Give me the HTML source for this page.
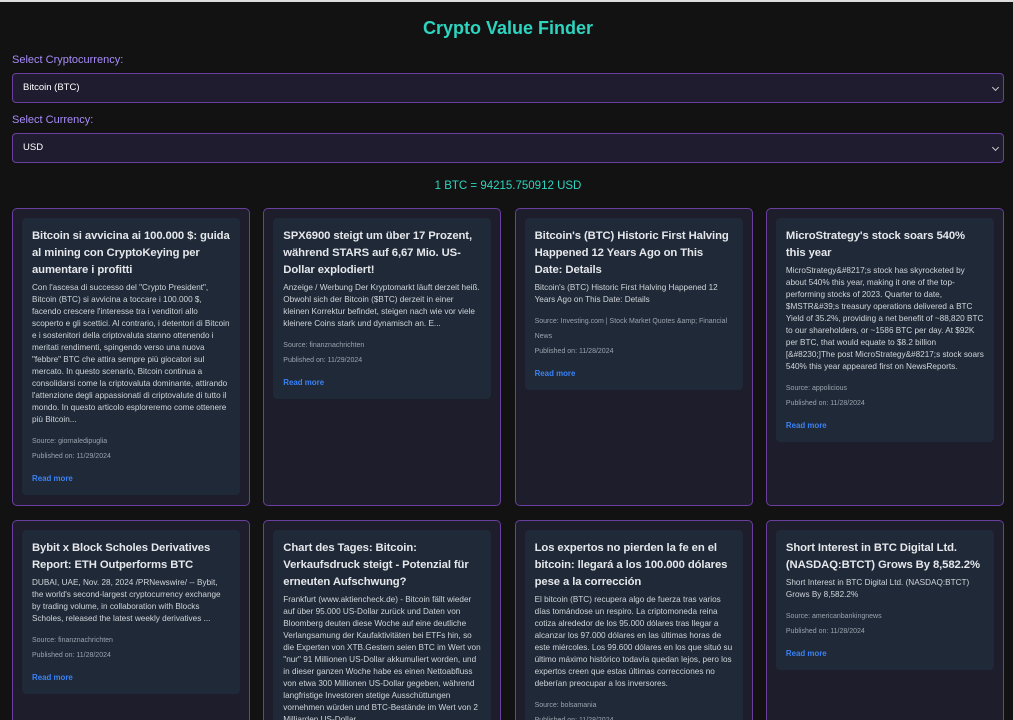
<!DOCTYPE html>
<html><head><meta charset="utf-8"><style>
*{box-sizing:border-box;margin:0;padding:0}
html,body{height:720px;overflow:hidden}
body{background:#121212;width:1013px;font-family:"Liberation Sans",sans-serif;color:#e5e7eb;padding:0 9px 0 12px;border-top:2px solid #ddd}
h1{text-align:center;color:#2dd4bf;font-size:18px;font-weight:bold;margin-top:15px;height:28px;line-height:22px}
label{display:block;color:#a78bfa;font-size:11px;height:16px;line-height:16px}
.sel{height:30px;background:#1e1c2e;border:1px solid #6b3fa0;border-radius:4px;font-size:9.5px;padding-left:10px;line-height:28px;color:#fff;position:relative;margin-top:5px;margin-bottom:9px}
.sel:after{content:"";position:absolute;right:5px;top:11px;width:4px;height:4px;border-right:1.3px solid #ccc;border-bottom:1.3px solid #ccc;transform:rotate(45deg)}
.rate{text-align:center;color:#2dd4bf;font-size:11.5px;margin-top:16px;height:29px;line-height:14px}
.grid{display:grid;grid-template-columns:repeat(4,238px);column-gap:13.3px;row-gap:14px}
.o{background:#1d1d2c;border:1px solid #6b3fa0;border-radius:5px;padding:9px 9px;height:298px}
.i{background:#1f2937;border-radius:4px;padding:10px 10px 10px;}
.i h3{font-size:11.3px;line-height:17px;color:#e5e7eb;font-weight:bold;margin-bottom:3px;letter-spacing:-0.1px}
.i p{font-size:8.2px;line-height:12px;color:#d1d5db}
.i .s{font-size:7px;color:#9ca3af;line-height:15px}
.i .s1{margin-top:8px}
.i a{display:block;font-size:7.9px;font-weight:bold;color:#3b82f6;margin-top:9px;line-height:12px;text-decoration:none}
</style></head><body>
<h1>Crypto Value Finder</h1>
<label style="margin-top:7px">Select Cryptocurrency:</label>
<div class="sel">Bitcoin (BTC)</div>
<label>Select Currency:</label>
<div class="sel">USD</div>
<div class="rate">1 BTC = 94215.750912 USD</div>
<div class="grid">
<div class="o"><div class="i"><h3>Bitcoin si avvicina ai 100.000 $: guida al mining con CryptoKeying per aumentare i profitti</h3><p>Con l'ascesa di successo del "Crypto President", Bitcoin (BTC) si avvicina a toccare i 100.000 $, facendo crescere l'interesse tra i venditori allo scoperto e gli scettici. Al contrario, i detentori di Bitcoin e i sostenitori della criptovaluta stanno ottenendo i meritati rendimenti, spingendo verso una nuova "febbre" BTC che attira sempre più giocatori sul mercato. In questo scenario, Bitcoin continua a consolidarsi come la criptovaluta dominante, attirando l'attenzione degli appassionati di criptovalute di tutto il mondo. In questo articolo esploreremo come ottenere più Bitcoin...</p><div class="s s1">Source: giornaledipuglia</div><div class="s">Published on: 11/29/2024</div><a>Read more</a></div></div>
<div class="o"><div class="i"><h3>SPX6900 steigt um über 17 Prozent, während STARS auf 6,67 Mio. US-Dollar explodiert!</h3><p>Anzeige / Werbung Der Kryptomarkt läuft derzeit heiß. Obwohl sich der Bitcoin ($BTC) derzeit in einer kleinen Korrektur befindet, steigen nach wie vor viele kleinere Coins stark und dynamisch an. E...</p><div class="s s1">Source: finanznachrichten</div><div class="s">Published on: 11/29/2024</div><a>Read more</a></div></div>
<div class="o"><div class="i"><h3>Bitcoin's (BTC) Historic First Halving Happened 12 Years Ago on This Date: Details</h3><p>Bitcoin's (BTC) Historic First Halving Happened 12 Years Ago on This Date: Details</p><div class="s s1">Source: Investing.com | Stock Market Quotes &amp;amp; Financial News</div><div class="s">Published on: 11/28/2024</div><a>Read more</a></div></div>
<div class="o"><div class="i"><h3>MicroStrategy's stock soars 540% this year</h3><p>MicroStrategy&amp;#8217;s stock has skyrocketed by about 540% this year, making it one of the top-performing stocks of 2023. Quarter to date, $MSTR&amp;#39;s treasury operations delivered a BTC Yield of 35.2%, providing a net benefit of ~88,820 BTC to our shareholders, or ~1586 BTC per day. At $92K per BTC, that would equate to $8.2 billion [&amp;#8230;]The post MicroStrategy&amp;#8217;s stock soars 540% this year appeared first on NewsReports.</p><div class="s s1">Source: appolicious</div><div class="s">Published on: 11/28/2024</div><a>Read more</a></div></div>
<div class="o" style="height:260px"><div class="i"><h3>Bybit x Block Scholes Derivatives Report: ETH Outperforms BTC</h3><p>DUBAI, UAE, Nov. 28, 2024 /PRNewswire/ -- Bybit, the world's second-largest cryptocurrency exchange by trading volume, in collaboration with Blocks Scholes, released the latest weekly derivatives ...</p><div class="s s1">Source: finanznachrichten</div><div class="s">Published on: 11/28/2024</div><a>Read more</a></div></div>
<div class="o" style="height:260px"><div class="i"><h3>Chart des Tages: Bitcoin: Verkaufsdruck steigt - Potenzial für erneuten Aufschwung?</h3><p>Frankfurt (www.aktiencheck.de) - Bitcoin fällt wieder auf über 95.000 US-Dollar zurück und Daten von Bloomberg deuten diese Woche auf eine deutliche Verlangsamung der Kaufaktivitäten bei ETFs hin, so die Experten von XTB.Gestern seien BTC im Wert von "nur" 91 Millionen US-Dollar akkumuliert worden, und in dieser ganzen Woche habe es einen Nettoabfluss von etwa 300 Millionen US-Dollar gegeben, während langfristige Investoren stetige Ausschüttungen vornehmen würden und BTC-Bestände im Wert von 2 Milliarden US-Dollar</p></div></div>
<div class="o" style="height:260px"><div class="i"><h3>Los expertos no pierden la fe en el bitcoin: llegará a los 100.000 dólares pese a la corrección</h3><p>El bitcoin (BTC) recupera algo de fuerza tras varios días tomándose un respiro. La criptomoneda reina cotiza alrededor de los 95.000 dólares tras llegar a alcanzar los 97.000 dólares en las últimas horas de este miércoles. Los 99.600 dólares en los que situó su último máximo histórico todavía quedan lejos, pero los expertos creen que estas últimas correcciones no deberían preocupar a los inversores.</p><div class="s s1">Source: bolsamania</div><div class="s">Published on: 11/28/2024</div></div></div>
<div class="o" style="height:260px"><div class="i"><h3>Short Interest in BTC Digital Ltd. (NASDAQ:BTCT) Grows By 8,582.2%</h3><p>Short Interest in BTC Digital Ltd. (NASDAQ:BTCT) Grows By 8,582.2%</p><div class="s s1">Source: americanbankingnews</div><div class="s">Published on: 11/28/2024</div><a>Read more</a></div></div>
</div>
</body></html>
